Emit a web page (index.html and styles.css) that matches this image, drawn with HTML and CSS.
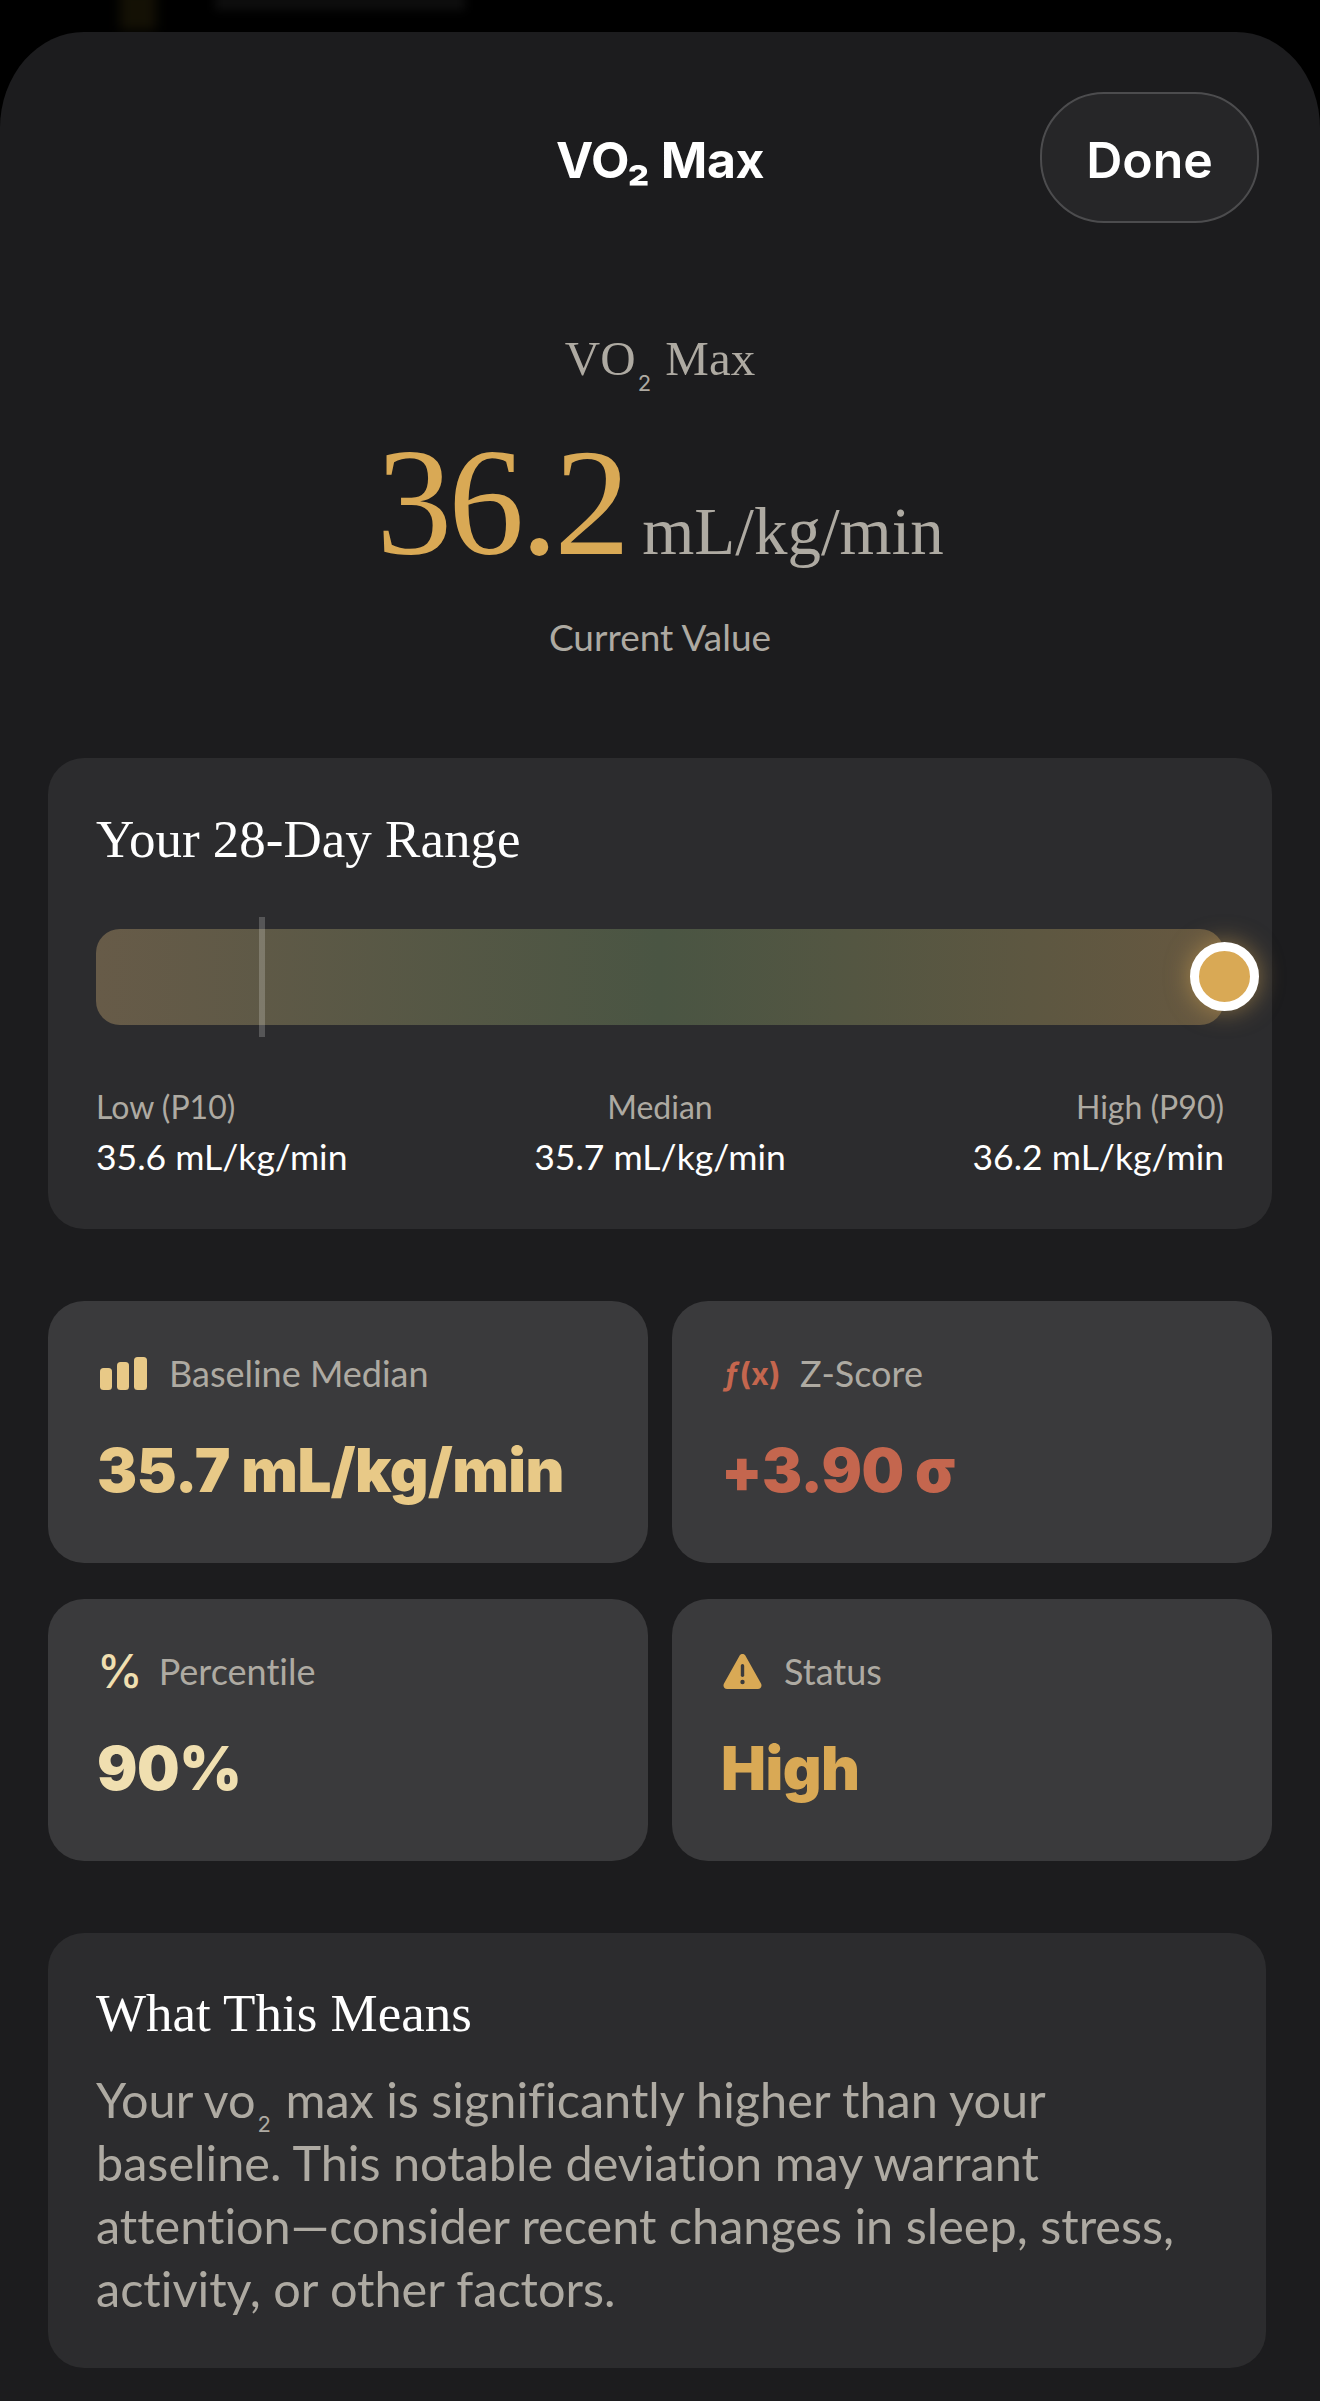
FILE: index.html
```html
<!DOCTYPE html>
<html lang="en">
<head>
<meta charset="utf-8">
<title>VO2 Max</title>
<link rel="stylesheet" href="styles.css">
</head>
<body>
<div class="peek" aria-hidden="true"><span class="peek-dot"></span><span class="peek-text"></span></div>
<main class="sheet">
  <header class="nav">
    <h1 class="nav-title">VO₂ Max</h1>
    <button class="done">Done</button>
  </header>

  <section class="hero">
    <div class="hero-label">VO<sub>2</sub> Max</div>
    <div class="hero-value"><span class="hero-num">36.2</span> <span class="hero-unit">mL/kg/min</span></div>
    <div class="hero-caption">Current Value</div>
  </section>

  <section class="panel range">
    <h2 class="serif-title">Your 28-Day Range</h2>
    <div class="track-wrap">
      <div class="track"></div>
      <span class="median-mark"></span>
      <span class="thumb"></span>
    </div>
    <div class="range-cols">
      <div class="col"><div class="col-label">Low (P10)</div><div class="col-value">35.6 mL/kg/min</div></div>
      <div class="col col-mid"><div class="col-label">Median</div><div class="col-value">35.7 mL/kg/min</div></div>
      <div class="col col-end"><div class="col-label">High (P90)</div><div class="col-value">36.2 mL/kg/min</div></div>
    </div>
  </section>

  <section class="stats">
    <div class="stat">
      <div class="stat-head">
        <svg class="ico ico-bars" viewBox="0 0 47 33"><rect x="0" y="11" width="12" height="22" rx="3.5"/><rect x="17" y="5" width="12" height="28" rx="3.5"/><rect x="34" y="0" width="13" height="33" rx="3.5"/></svg>
        <span class="stat-label">Baseline Median</span>
      </div>
      <div class="stat-value c-sand">35.7 mL/kg/min</div>
    </div>
    <div class="stat">
      <div class="stat-head">
        <span class="ico-fx"><i>ƒ</i>(x)</span>
        <span class="stat-label">Z-Score</span>
      </div>
      <div class="stat-value c-red">+3.90 σ</div>
    </div>
    <div class="stat">
      <div class="stat-head">
        <span class="ico-pct">%</span>
        <span class="stat-label">Percentile</span>
      </div>
      <div class="stat-value c-cream">90%</div>
    </div>
    <div class="stat">
      <div class="stat-head">
        <svg class="ico ico-warn" viewBox="0 0 39 35"><path class="warn-body" d="M16.4 2 1 29.6C-.4 32.2 1.2 35 4.2 35h30.6c3 0 4.6-2.8 3.2-5.4L22.6 2c-1.4-2.6-4.800-2.600-6.200 0Z"/><rect class="warn-mark" x="17.800" y="10" width="3.400" height="13" rx="1.700"/><circle class="warn-mark" cx="19.500" cy="28" r="2.200"/></svg>
        <span class="stat-label">Status</span>
      </div>
      <div class="stat-value c-gold">High</div>
    </div>
  </section>

  <section class="panel meaning">
    <h2 class="serif-title">What This Means</h2>
    <p class="meaning-text">Your vo<sub>2</sub> max is significantly higher than your baseline. This notable deviation may warrant attention—consider recent changes in sleep, stress, activity, or other factors.</p>
  </section>
</main>
</body>
</html>
```

FILE: styles.css
```css
* { box-sizing: border-box; }
html, body { margin: 0; padding: 0; }
body {
  background: #000;
  width: 1320px;
  height: 2401px;
  overflow: hidden;
  position: relative;
  font-family: "Lato", "Liberation Sans", sans-serif;
  font-variant-ligatures: none;
}
.peek { position: absolute; top: 0; left: 0; width: 100%; height: 32px; }
.peek-dot { position: absolute; left: 120px; top: -10px; width: 36px; height: 40px; background: #141105; filter: blur(6px); }
.peek-text { position: absolute; left: 215px; top: -6px; width: 250px; height: 16px; background: #0e0e0e; filter: blur(5px); }

.sheet {
  position: relative;
  margin-top: 32px;
  height: 2369px;
  background: #1c1c1e;
  border-radius: 84px 84px 0 0 / 96px 96px 0 0;
  padding: 60px 48px 0;
  overflow: hidden;
}

.nav {
  display: grid;
  grid-template-columns: 1fr auto 1fr;
  align-items: center;
  height: 131px;
  margin-right: 13px;
}
.nav-title {
  grid-column: 2;
  margin: 4px 0 0 13px;
  font: 700 50px "Inter", sans-serif;
  letter-spacing: -0.5px;
  color: #fff;
}
.done {
  grid-column: 3;
  justify-self: end;
  width: 219px;
  height: 131px;
  border-radius: 64px;
  border: 2px solid #4c4c4e;
  background: #262628;
  color: #fff;
  font: 600 50px "Inter", sans-serif;
  padding: 4px 0 0;
}

.hero { text-align: center; padding-top: 111px; }
.hero-label {
  font: 400 49px/1 "Liberation Serif", serif;
  color: #aeaaa2;
  height: 50px;
}
.hero-label sub { font: 400 22px "Inter", sans-serif; vertical-align: -16px; line-height: 0; margin: 0 2px; }
.hero-value {
  margin-top: 49px;
  height: 140px;
  display: flex;
  justify-content: center;
  align-items: baseline;
  gap: 16px;
  line-height: 140px;
  font-family: "Liberation Serif", serif;
}
.hero-num { font-size: 152px; letter-spacing: -4px; color: #d9a955; }
.hero-unit { font-size: 67px; color: #aeaaa2; }
.hero-caption { margin-top: 44px; font-size: 37px; line-height: 40px; color: #aeaaa2; }

.panel { background: #2c2c2e; border-radius: 36px; padding: 48px; }
.range { margin-top: 101px; height: 471px; width: 1224px; }
.serif-title {
  margin: 0;
  font: 400 53px/66px "Liberation Serif", serif;
  color: #fff;
}

.track-wrap { position: relative; margin-top: 45px; height: 120px; display: flex; align-items: center; }
.track {
  width: 100%;
  height: 96px;
  border-radius: 24px;
  background: linear-gradient(90deg, #675b48 0%, #4a5543 50%, #675840 100%);
}
.median-mark { position: absolute; left: 163px; top: 0; width: 6px; height: 120px; background: rgba(255,255,255,.2); }
.thumb {
  position: absolute;
  right: -35px;
  top: 25px;
  width: 69px;
  height: 69px;
  border-radius: 50%;
  background: #d9a955;
  border: 9px solid #fff;
  box-shadow: 0 0 24px rgba(217,169,85,.55);
}

.range-cols { display: flex; justify-content: space-between; margin-top: 50px; }
.col-label { font-size: 32px; line-height: 40px; color: #aeaaa2; }
.col-value { margin-top: 9px; font-size: 35.5px; line-height: 42px; color: #fff; }
.col-mid { text-align: center; }
.col-end { text-align: right; }

.stats {
  display: grid;
  grid-template-columns: 600px 600px;
  grid-auto-rows: 262px;
  gap: 36px 24px;
  margin-top: 72px;
}
.stat { background: #3a3a3c; border-radius: 36px; padding: 55px 49px 0; }
.stat-head { display: flex; align-items: center; height: 34px; gap: 22px; }
.stat-label { font-size: 36px; color: #aeaaa2; }
.ico { display: block; flex: none; }
.ico-bars { width: 47px; height: 33px; fill: #e8c987; margin-left: 3px; }
.ico-warn { width: 39px; height: 35px; margin-left: 2px; }
.warn-body { fill: #d9a955; }
.warn-mark { fill: #3a3a3c; }
.ico-fx { font: 700 31px "Inter", sans-serif; color: #c4664e; width: 54px; margin-left: 3px; }
.ico-fx i { font-style: italic; margin-right: 1px; }
.ico-pct { font: 500 46px "Inter", sans-serif; color: #f0dfb0; margin-right: -6px; }
.stat-value { margin-top: 45px; font: 900 60px/70px "Inter", sans-serif; letter-spacing: -0.5px; }
.c-sand { color: #e8c987; }
.c-red { color: #c4664e; }
.c-cream { color: #f0dfb0; }
.c-gold { color: #d9a955; }

.meaning { margin-top: 72px; width: 1218px; height: 435px; padding-top: 47px; }
.meaning-text { margin: 22px 0 0; font-size: 48.6px; line-height: 63px; color: #aeaaa2; }
.meaning-text sub { font-size: 22px; line-height: 0; vertical-align: -14px; font-family: "Inter", sans-serif; margin: 0 2px; }
```
